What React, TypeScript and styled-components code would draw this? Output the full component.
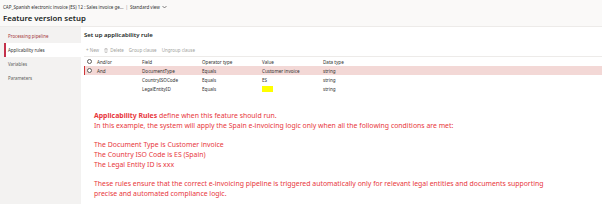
import React from 'react';
import styled, { createGlobalStyle } from 'styled-components';

const Global = createGlobalStyle`
  html, body { margin: 0; padding: 0; background: #ffffff; }
  body { font-family: "Noto Sans", "Open Sans", sans-serif; color: #323130; }
  * { box-sizing: border-box; }
`;

const Page = styled.div`
  width: 602px;
  height: 204px;
  display: flex;
  flex-direction: column;
  overflow: hidden;
`;

const Header = styled.header`
  height: 27px;
  background: #faf9f8;
  border-bottom: 1px solid #edebe9;
  padding: 3px 0 0 3px;
`;

const Crumb = styled.div`
  display: flex;
  align-items: center;
  gap: 2px;
  font-size: 4.5px;
  line-height: 8px;
  color: #323130;
`;

const Sep = styled.span`
  color: #8a8886;
`;

const Title = styled.h1`
  margin: 1px 0 0;
  font-size: 7.8px;
  font-weight: 600;
  line-height: 12px;
  color: #201f1e;
`;

const Main = styled.div`
  flex: 1;
  display: flex;
  min-height: 0;
`;

const Nav = styled.nav`
  width: 81px;
  background: #f3f2f1;
  padding: 2px 0 0 4px;
  display: flex;
  flex-direction: column;
`;

const NavItem = styled.div<{ $active?: boolean; $accent?: boolean }>`
  height: 14px;
  display: flex;
  align-items: center;
  padding-left: ${(p) => (p.$active ? '2px' : '4px')};
  font-size: 4.45px;
  color: ${(p) => (p.$accent ? '#a4373a' : p.$active ? '#323130' : '#605e5c')};
  background: ${(p) => (p.$active ? '#ffffff' : 'transparent')};
  border-left: ${(p) => (p.$active ? '2px solid #c4314b' : 'none')};
`;

const Panel = styled.section`
  flex: 1;
  background: #ffffff;
  padding: 3px 0 0 3px;
  display: flex;
  flex-direction: column;
`;

const PanelTitle = styled.h2`
  margin: 0;
  font-size: 6px;
  font-weight: 600;
  line-height: 10px;
  color: #201f1e;
`;

const Toolbar = styled.div`
  display: flex;
  align-items: center;
  gap: 5px;
  height: 10px;
  margin-top: 7px;
  padding-left: 2px;
  font-size: 4.5px;
  color: #a19f9d;
`;

const ToolButton = styled.span`
  display: inline-flex;
  align-items: center;
  gap: 2px;
`;

const Table = styled.div`
  margin-top: 3px;
  border-top: 1px solid #edebe9;
  display: grid;
  grid-template-columns: 11px 45px 60px 60px 61px 1fr;
`;

const Row = styled.div<{ $selected?: boolean }>`
  display: contents;
  & > div {
    height: 9px;
    background: ${(p) => (p.$selected ? '#f3d8d6' : '#ffffff')};
    color: #323130;
  }
  & > div:first-child {
    border-left: 1px solid ${(p) => (p.$selected ? '#d13438' : 'transparent')};
  }
`;

const Cell = styled.div`
  display: flex;
  align-items: center;
  padding-left: 2px;
  font-size: 4.6px;
  white-space: nowrap;
`;

const Radio = styled.span`
  width: 5px;
  height: 5px;
  border-radius: 50%;
  border: 0.7px solid #605e5c;
  background: #ffffff;
`;

const Highlight = styled.span`
  width: 11px;
  height: 6px;
  background: #ffff00;
`;

const Notes = styled.div`
  margin-top: 18px;
  padding-left: 10px;
  color: #e8373d;
  font-size: 6.9px;
  line-height: 9.7px;
`;

const Para = styled.p`
  margin: 0 0 9.7px;
`;

const Strong = styled.b`
  font-weight: 700;
`;

const Chevron = () => (
  <svg width="5" height="4" viewBox="0 0 10 6" fill="none" stroke="#323130" strokeWidth="1.2">
    <path d="M1 1l4 4 4-4" />
  </svg>
);

const Trash = () => (
  <svg width="4" height="5" viewBox="0 0 8 10" fill="none" stroke="#a19f9d" strokeWidth="1">
    <path d="M1 2h6M3 2V1h2v1M1.8 2l.5 7h3.4l.5-7" />
  </svg>
);

const rows = [
  { andor: 'And', field: 'DocumentType', op: 'Equals', value: 'Customer invoice', type: 'string', radio: true, selected: true },
  { andor: '', field: 'CountryISOCode', op: 'Equals', value: 'ES', type: 'string', radio: false, selected: false },
  { andor: '', field: 'LegalEntityID', op: 'Equals', value: null, type: 'string', radio: false, selected: false },
];

export default function App() {
  return (
    <Page>
      <Global />
      <Header>
        <Crumb>
          <span>CAP_Spanish electronic invoice (ES) 12 : Sales invoice ge...</span>
          <Sep>|</Sep>
          <span>Standard view</span>
          <Chevron />
        </Crumb>
        <Title>Feature version setup</Title>
      </Header>
      <Main>
        <Nav>
          <NavItem $accent>Processing pipeline</NavItem>
          <NavItem $active>Applicability rules</NavItem>
          <NavItem>Variables</NavItem>
          <NavItem>Parameters</NavItem>
        </Nav>
        <Panel>
          <PanelTitle>Set up applicability rule</PanelTitle>
          <Toolbar>
            <ToolButton>+ New</ToolButton>
            <ToolButton>
              <Trash />
              Delete
            </ToolButton>
            <ToolButton>Group clause</ToolButton>
            <ToolButton>Ungroup clause</ToolButton>
          </Toolbar>
          <Table>
            <Row>
              <Cell><Radio /></Cell>
              <Cell>And/or</Cell>
              <Cell>Field</Cell>
              <Cell>Operator type</Cell>
              <Cell>Value</Cell>
              <Cell>Data type</Cell>
            </Row>
            {rows.map((r) => (
              <Row key={r.field} $selected={r.selected}>
                <Cell>{r.radio && <Radio />}</Cell>
                <Cell>{r.andor}</Cell>
                <Cell>{r.field}</Cell>
                <Cell>{r.op}</Cell>
                <Cell>{r.value === null ? <Highlight /> : r.value}</Cell>
                <Cell>{r.type}</Cell>
              </Row>
            ))}
          </Table>
          <Notes>
            <Para>
              <Strong>Applicability Rules</Strong> define when this feature should run.
              <br />
              In this example, the system will apply the Spain e-invoicing logic only when all the following conditions are met:
            </Para>
            <Para>
              The Document Type is Customer invoice
              <br />
              The Country ISO Code is ES (Spain)
              <br />
              The Legal Entity ID is xxx
            </Para>
            <Para>
              These rules ensure that the correct e-invoicing pipeline is triggered automatically only for relevant legal entities and documents supporting
              <br />
              precise and automated compliance logic.
            </Para>
          </Notes>
        </Panel>
      </Main>
    </Page>
  );
}
